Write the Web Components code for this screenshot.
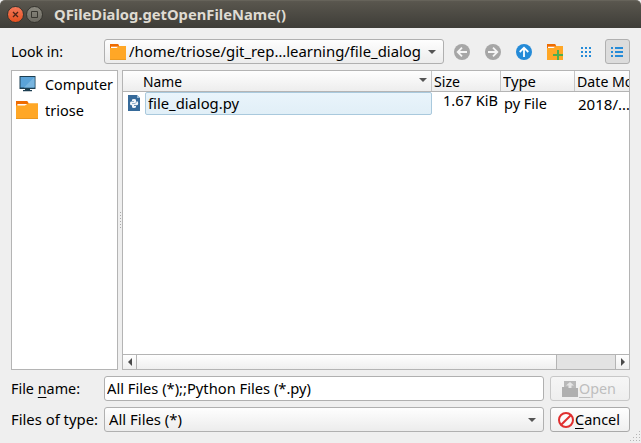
<!DOCTYPE html>
<html lang="en"><head><meta charset="utf-8"><title>QFileDialog.getOpenFileName()</title>
<style>html,body{margin:0;height:100%;overflow:hidden;background:#efefef}</style></head>
<body>
<file-dialog></file-dialog>
<script>
const define = (name, html, setup) => customElements.define(name, class extends HTMLElement {
  constructor(){ super(); this.attachShadow({mode:'open'}).innerHTML = '<style>*{box-sizing:border-box}svg{display:block}</style>' + html; }
  connectedCallback(){ if(setup) setup(this, this.shadowRoot); }
});

const folder = (w,h) => `<svg width="${w}" height="${h}" viewBox="0 0 16 16" preserveAspectRatio="none"><path fill="#ef6c00" d="M0 0h8.2l1 2v3H0z"/><path fill="#fff" d="M1 2.700h7v2H1z"/><path fill="#ffa726" d="M0 4h6.500l2.500-2H16v14H0z"/><path fill="#d98c1d" d="M0 15.500h16v.5H0z"/></svg>`;
const icons = {
  folder: folder(16,16),
  bigfolder: folder(22,18),
  computer: `<svg width="17" height="16" viewBox="0 0 17 16"><path fill="#1d3f52" d="M.5 0h16v13H.5z"/><path fill="#5ba3d8" d="M1.500 1h14v10.500h-14z"/><path fill="#79b5df" d="M15.500 1v10.500H5z"/><path fill="#1d3f52" d="M6 13h5v1H6zM4 14h9v1.200H4z"/></svg>`,
  python: `<svg width="12" height="16" viewBox="0 0 12 16"><path fill="#366a9a" d="M0 0h9l3 3v13H0z"/><path fill="#9cbdd8" d="M9 0l3 3H9z"/><path fill="#f4f7fa" d="M4 4.800Q4 4 6 4t2 1v2.200Q8 8 7 8H5Q4 8 4 9v1.200H3Q2 10.200 2 8.500t1-1.900h3V6H4zM8.500 6.300H9q1.200 0 1.200 2t-1.200 2H6v.6h2v1q0 1.100-2 1.100t-2-1.100V9.500Q4 8.500 5 8.500h2q1.500 0 1.500-1.400z"/></svg>`,
  back: `<svg width="16" height="16" viewBox="0 0 16 16"><circle cx="8" cy="8" r="8" fill="#a6a6a6"/><path d="M13 8H4M8 3.700L3.700 8 8 12.300" fill="none" stroke="#f5f5f5" stroke-width="1.800"/></svg>`,
  forward: `<svg width="16" height="16" viewBox="0 0 16 16"><circle cx="8" cy="8" r="8" fill="#a6a6a6"/><path d="M3 8h9M8 3.700L12.300 8 8 12.300" fill="none" stroke="#f5f5f5" stroke-width="1.800"/></svg>`,
  up: `<svg width="16" height="16" viewBox="0 0 16 16"><circle cx="8" cy="8" r="8" fill="#258bd8"/><path d="M8 13V4M3.700 8L8 3.700 12.300 8" fill="none" stroke="#fff" stroke-width="1.800"/></svg>`,
  newfolder: `<svg width="16" height="16" viewBox="0 0 16 16"><path fill="#ef6c00" d="M0 0h8.200l1 2v3H0z"/><path fill="#fff" d="M1 2.700h7v2H1z"/><path fill="#ffa726" d="M0 4h6.500l2.500-2H16v14H0z"/><path fill="#4caf50" d="M10 6h2v4h4v2h-4v4h-2v-4H6v-2h4z"/></svg>`,
  grid: `<svg width="10" height="10" viewBox="0 0 10 10" fill="#258bd8" shape-rendering="crispEdges">${[0,4,8].map(x=>[0,4,8].map(y=>`<path d="M${x} ${y}h2v2h-2z"/>`).join('')).join('')}</svg>`,
  list: `<svg width="12" height="10" viewBox="0 0 12 10" fill="#258bd8" shape-rendering="crispEdges"><path d="M0 0h2v2H0zM0 4h2v2H0zM0 8h2v2H0zM4 0h8v2H4zM4 4h8v2H4zM4 8h8v2H4z"/></svg>`,
  open: `<svg width="16" height="16" viewBox="0 0 16 16"><path fill="#b9b9b9" d="M2 0h12v10H2z"/><path fill="#b0b0b0" d="M0 6h6l1.500 1H16v9H0z"/><path fill="#e6e6e6" d="M8 1l4 3.500H9.500V7h-3V4.500H4z"/></svg>`,
  cancel: `<svg width="16" height="16" viewBox="0 0 16 16"><circle cx="8" cy="8" r="7" fill="#fff" fill-opacity=".6" stroke="#e02f2f" stroke-width="2"/><path d="M3.200 12.800l9.600-9.600" stroke="#e02f2f" stroke-width="2"/></svg>`,
  down: `<svg width="8" height="4" viewBox="0 0 8 4"><path fill="#555" d="M0 0h8L4 4z"/></svg>`,
  left: `<svg width="4" height="8" viewBox="0 0 4 8"><path fill="#4a4a4a" d="M4 0v8L0 4z"/></svg>`,
  right: `<svg width="4" height="8" viewBox="0 0 4 8"><path fill="#4a4a4a" d="M0 0v8l4-4z"/></svg>`
};
define('ui-icon', '<style>:host{display:block;flex:none}</style><div></div>', (el,r) => { r.querySelector('div').innerHTML = icons[el.getAttribute('name')]; });

define('title-bar', `<style>
:host{display:flex;align-items:center;height:28px;padding:0 0 0 7px;background:linear-gradient(#5b5850,#57544c 10%,#3e3d38);border-top:1px solid #66635a;border-radius:5px 5px 0 0;color:#dfdbd2;box-sizing:border-box;font-weight:700}
i{width:17px;height:17px;border-radius:50%;margin-right:2px;background:linear-gradient(#8b897f,#6c6a62);border:1px solid #36352f;display:grid;place-items:center}
i.c{background:linear-gradient(#f4795a,#e5501f)}
slot{display:block}.t{margin-left:9px}
</style><i class="c"><svg width="7" height="7"><path d="M1 1l5 5M6 1L1 6" stroke="#4d2418" stroke-width="1.300"/></svg></i><i><svg width="7" height="7"><path d="M.5.5h6v6h-6z" fill="none" stroke="#383731"/></svg></i><div class="t"><slot></slot></div>`);

define('form-row', `<style>:host{display:flex;height:25px;align-items:center;box-sizing:border-box}.l{width:93px;flex:none}</style><div class="l"><slot name="label"></slot></div><slot></slot>`);

define('combo-box', `<style>:host{display:flex;align-items:center;height:25px;border:1px solid #b0b0b0;border-radius:3px;background:linear-gradient(#fefefe,#ececec);box-sizing:border-box;padding:0 7px 0 5px}
ui-icon{margin-left:auto}</style><slot></slot><ui-icon name="down"></ui-icon>`);
define('line-edit', `<style>:host{display:flex;align-items:center;height:25px;border:1px solid #b0b0b0;border-radius:3px;background:#fff;box-sizing:border-box;padding:0 3px 0 2px}</style><slot></slot>`);
define('push-button', `<style>:host{display:flex;align-items:center;height:25px;width:80px;margin-left:6px;border:1px solid #aaa;border-radius:3px;background:linear-gradient(#fefefe,#efefef);box-sizing:border-box;padding-left:7px;gap:1px}
:host([disabled]){color:#bebebe;border-color:#c8c8c8;background:linear-gradient(#f6f6f6,#eee);padding-left:11px}</style><slot></slot>`);
define('tool-button', `<style>:host{display:grid;place-items:center;width:25px;height:25px;margin-left:6px;border:1px solid transparent;border-radius:3px;box-sizing:border-box;padding-right:1px}
:host([pressed]){background:#dcdcdc;border-color:#b0b0b0}</style><slot></slot>`);

define('side-bar', `<style>:host{display:block;width:107px;height:300px;border:1px solid #b4b4b4;background:#fff;box-sizing:border-box;overflow:hidden}</style><slot></slot>`);
define('side-item', `<style>:host{display:flex;height:26px;align-items:center;padding-left:4px}.i{width:22px;display:grid;place-items:center;margin-right:7px}</style><div class="i"><slot name="icon"></slot></div><slot></slot>`);
define('split-handle', `<style>:host{display:flex;flex-direction:column;gap:2px;justify-content:center;align-items:center;width:4px;flex:none}i{width:1px;height:1px;background:#aaa}</style><i></i><i></i><i></i><i></i><i></i><i></i>`);

define('file-list', `<style>
:host{display:flex;flex-direction:column;width:508px;height:300px;border:1px solid #b4b4b4;background:#fff;box-sizing:border-box;overflow:hidden}
.h,.r{display:grid;grid-template-columns:309px 69px 74px 90px;flex:none}
.h{height:21px;background:linear-gradient(#fefefe,#ededed);border-bottom:1px solid #b4b4b4}
.h>*{display:flex;align-items:center;padding-left:2px;border-right:1px solid #c6c6c6}
.h>:first-child{padding:0 4px 0 20px}.h>:first-child ui-icon{margin:0 0 3px auto}
.r{height:23px}.n{display:flex;align-items:center;padding-left:5px}.n>ui-icon{margin-top:-1px}
.sel{display:flex;align-items:center;margin-left:5px;flex:1;height:23px;border:1px solid #a9c9dd;border-radius:2px;padding-left:2px;background:linear-gradient(#e9f4fb,#e1eff7)}
.s{display:flex;justify-content:flex-end;padding:0 3px 0 0;margin-top:-1px}
.ty{padding:2px 0 0 3px}.d{padding:3px 0 0 3px}
.fill{flex:1}
.sb{display:flex;height:15px;border-top:1px solid #b4b4b4;background:#e3e3e3;flex:none}
.sb div{background:linear-gradient(#fefefe,#efefef);display:grid;place-items:center}
.a{width:14px;border-right:1px solid #b4b4b4}.th{width:420px;border-right:1px solid #b4b4b4}.b{width:14px;margin-left:auto;border-left:1px solid #b4b4b4}
</style>
<div class="h"><div><fit-text w="39">Name</fit-text><ui-icon name="down"></ui-icon></div><div><fit-text w="26">Size</fit-text></div><div><fit-text w="33">Type</fit-text></div><div><fit-text w="94">Date Modified</fit-text></div></div>
<div class="r"><div class="n"><ui-icon name="python"></ui-icon><div class="sel"><fit-text w="91">file_dialog.py</fit-text></div></div><div class="s"><fit-text w="55">1.67 KiB</fit-text></div><div class="ty"><fit-text w="43">py File</fit-text></div><div class="d"><fit-text w="52">2018/…</fit-text></div></div>
<div class="fill"></div>
<div class="sb"><div class="a"><ui-icon name="left"></ui-icon></div><div class="th"></div><div class="b"><ui-icon name="right"></ui-icon></div></div>`);

define('size-grip', `<style>:host{position:absolute;right:0;bottom:1px}</style><svg width="11" height="11" fill="#b5b5b5">${[[9,0],[6,3],[9,3],[3,6],[6,6],[9,6],[0,9],[3,9],[6,9],[9,9]].map(p=>`<path d="M${p[0]} ${p[1]}h1v1h-1z"/>`).join('')}</svg>`);

define('file-dialog', `<style>
:host{display:block;position:relative;width:641px;height:443px;overflow:hidden;background:#efefef;font:15px/19px "Noto Sans","Open Sans",sans-serif;color:#000}
main{padding:11px 11px 0;display:flex;flex-direction:column;gap:6px}
.mid{display:flex}.edit{width:440px}u{text-decoration:none;border-bottom:1px solid currentColor;display:inline-block;line-height:17px}
</style>
<title-bar><fit-text w="232">QFileDialog.getOpenFileName()</fit-text></title-bar>
<main>
<form-row><fit-text slot="label" w="52">Look in:</fit-text><combo-box style="width:340px"><ui-icon name="folder"></ui-icon><fit-text w="292" style="margin-left:3px">/home/triose/git_rep…learning/file_dialog</fit-text></combo-box>
<tool-button><ui-icon name="back"></ui-icon></tool-button><tool-button><ui-icon name="forward"></ui-icon></tool-button><tool-button><ui-icon name="up"></ui-icon></tool-button><tool-button><ui-icon name="newfolder"></ui-icon></tool-button><tool-button><ui-icon name="grid"></ui-icon></tool-button><tool-button pressed><ui-icon name="list"></ui-icon></tool-button></form-row>
<div class="mid"><side-bar><side-item><ui-icon slot="icon" name="computer"></ui-icon><fit-text w="68">Computer</fit-text></side-item><side-item><ui-icon slot="icon" name="bigfolder"></ui-icon><fit-text w="39">triose</fit-text></side-item></side-bar><split-handle></split-handle><file-list></file-list></div>
<form-row><fit-text slot="label" w="69">File <u>n</u>ame:</fit-text><line-edit class="edit"><fit-text w="204">All Files (*);;Python Files (*.py)</fit-text></line-edit><push-button disabled><ui-icon name="open"></ui-icon><fit-text w="37"><u>O</u>pen</fit-text></push-button></form-row>
<form-row><fit-text slot="label" w="87">Files of type:</fit-text><combo-box class="edit" style="padding-left:4px"><fit-text w="73">All Files (*)</fit-text></combo-box><push-button><ui-icon name="cancel"></ui-icon><fit-text w="45"><u>C</u>ancel</fit-text></push-button></form-row>
</main><size-grip></size-grip>`);

/* A single line of text condensed or widened to the width in its "w" attribute. */
define('fit-text', `<style>:host{display:block;white-space:nowrap;flex:none}span{display:inline-block;transform-origin:0 50%;vertical-align:top}</style><span><slot></slot></span>`, (el,r) => {
  const s = r.querySelector('span'), w = +el.getAttribute('w');
  el.style.width = w + 'px';
  s.style.transform = `scaleX(${w / s.getBoundingClientRect().width})`;
});
</script>
</body></html>
